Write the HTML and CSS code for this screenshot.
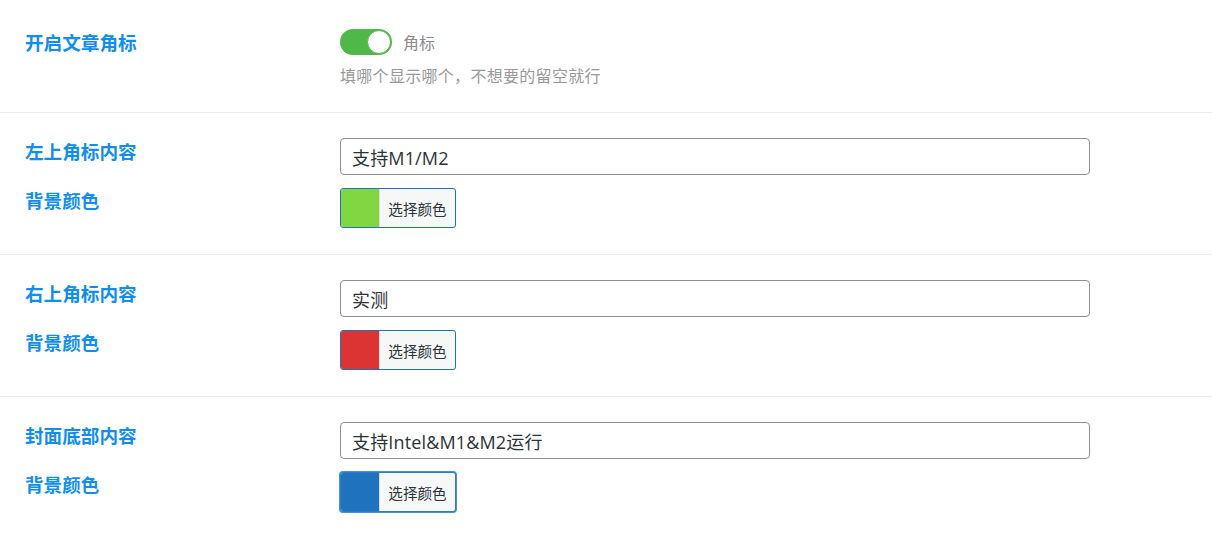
FILE: index.html
```html
<!DOCTYPE html>
<html lang="zh-CN">
<head>
<meta charset="utf-8">
<title>角标设置</title>
<link rel="stylesheet" href="styles.css">
</head>
<body>
<div class="settings">
  <section class="row row-first">
    <div class="field">
      <div class="label label-input">开启文章角标</div>
      <div class="control">
        <div class="switch-line">
          <span class="switch"><span class="knob"></span></span>
          <span class="switch-text">角标</span>
        </div>
        <div class="help">填哪个显示哪个，不想要的留空就行</div>
      </div>
    </div>
  </section>

  <section class="row">
    <div class="field">
      <div class="label label-input">左上角标内容</div>
      <div class="control"><input class="text-input" type="text" value="支持M1/M2"></div>
    </div>
    <div class="field">
      <div class="label">背景颜色</div>
      <div class="control">
        <button class="color-btn" type="button"><span class="swatch swatch-green"></span><span class="color-text">选择颜色</span></button>
      </div>
    </div>
  </section>

  <section class="row">
    <div class="field">
      <div class="label label-input">右上角标内容</div>
      <div class="control"><input class="text-input" type="text" value="实测"></div>
    </div>
    <div class="field">
      <div class="label">背景颜色</div>
      <div class="control">
        <button class="color-btn" type="button"><span class="swatch swatch-red"></span><span class="color-text">选择颜色</span></button>
      </div>
    </div>
  </section>

  <section class="row row-last">
    <div class="field">
      <div class="label label-input">封面底部内容</div>
      <div class="control"><input class="text-input" type="text" value="支持Intel&amp;M1&amp;M2运行"></div>
    </div>
    <div class="field">
      <div class="label">背景颜色</div>
      <div class="control">
        <button class="color-btn color-btn-focus" type="button"><span class="swatch swatch-blue"></span><span class="color-text">选择颜色</span></button>
      </div>
    </div>
  </section>
</div>
</body>
</html>
```

FILE: styles.css
```css
* { box-sizing: border-box; }

html, body {
  margin: 0;
  padding: 0;
  background: #ffffff;
}

body {
  font-family: "Open Sans", "Noto Sans CJK SC", sans-serif;
  color: #3c434a;
  width: 1212px;
  height: 539px;
  overflow: hidden;
}

.settings {
  display: flex;
  flex-direction: column;
}

.row {
  display: flex;
  flex-direction: column;
  gap: 13px;
  padding: 25px 0 26px 25px;
  border-bottom: 1px solid #ececec;
}

.row-first {
  padding-top: 29px;
  padding-bottom: 27px;
}

.row-last {
  border-bottom: none;
}

.field {
  display: flex;
  align-items: flex-start;
}

.label {
  width: 315px;
  flex: none;
  font-family: "Noto Sans CJK SC", sans-serif;
  font-weight: 700;
  font-size: 18.6px;
  line-height: 24px;
  color: #0f8ef0;
}

.label-input {
  margin-top: 1px;
}

.control {
  display: flex;
  flex-direction: column;
}

.switch-line {
  display: flex;
  align-items: center;
  gap: 11px;
  height: 26px;
}

.switch {
  width: 52px;
  height: 26px;
  border-radius: 13px;
  background: #50b848;
  display: flex;
  align-items: center;
  justify-content: flex-end;
  padding-right: 1px;
}

.knob {
  width: 24px;
  height: 24px;
  border-radius: 50%;
  background: #ffffff;
  border: 1px solid #50b848;
}

.switch-text {
  font-family: "Noto Sans CJK SC", sans-serif;
  font-size: 16px;
  color: #8c8c8c;
}

.help {
  margin-top: 10px;
  font-family: "Noto Sans CJK SC", sans-serif;
  font-size: 16px;
  letter-spacing: 0.3px;
  line-height: 20px;
  color: #999999;
}

.text-input {
  width: 750px;
  height: 37px;
  border: 1px solid #8c8f94;
  border-radius: 4px;
  padding: 0 11px;
  font-family: "Open Sans", "Noto Sans CJK SC", sans-serif;
  font-size: 18px;
  letter-spacing: 0.15px;
  color: #2c3338;
  background: #ffffff;
  outline: none;
}

.color-btn {
  display: flex;
  align-items: stretch;
  width: 116px;
  height: 40px;
  padding: 0;
  border: 1px solid #2271b1;
  border-radius: 3px;
  background: #f6f7f7;
  overflow: hidden;
  cursor: pointer;
}

.color-btn-focus {
  box-shadow: 0 0 0 1px #4a90d6;
  border-color: #2c7bc7;
}

.swatch {
  width: 39px;
  flex: none;
  border-right: 1px solid #dcdcde;
}

.swatch-green { background: #81d742; }
.swatch-red { background: #dd3333; }
.swatch-blue { background: #1e73be; }

.color-text {
  flex: 1;
  display: flex;
  align-items: center;
  justify-content: center;
  font-family: "Noto Sans CJK SC", sans-serif;
  font-size: 14.6px;
  color: #2c3338;
}
```
